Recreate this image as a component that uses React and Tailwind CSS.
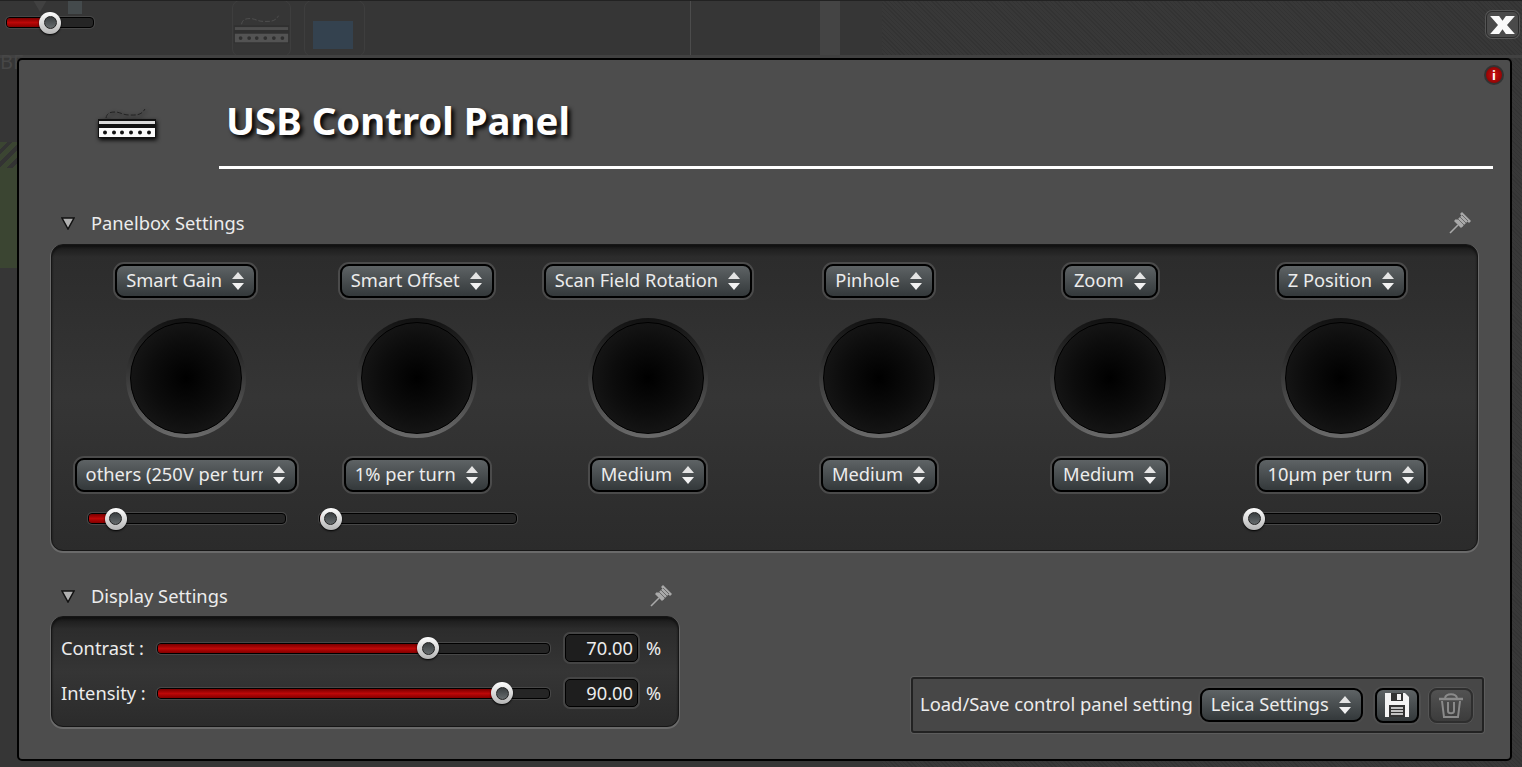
const sectionWell =
  "rounded-[12px] border border-[#161616] bg-[linear-gradient(#181818_0px,#2c2c2c_12px,#353535_50%,#2b2b2b_100%)] shadow-[inset_0_2px_2px_#111,0_1px_0_1px_#6a6a6a]";

const panelColumns = [
  { top: "Smart Gain", bottom: "others (250V per turn)", clip: true, slider: 27 },
  { top: "Smart Offset", bottom: "1% per turn", slider: 11 },
  { top: "Scan Field Rotation", bottom: "Medium" },
  { top: "Pinhole", bottom: "Medium" },
  { top: "Zoom", bottom: "Medium" },
  { top: "Z Position", bottom: "10µm per turn", slider: 10 },
];

function Arrows() {
  return (
    <svg width="12" height="20" viewBox="0 0 12 20" className="shrink-0">
      <path d="M6 1 L12 8 H0 Z" fill="#e4e4e4" />
      <path d="M0 12 H12 L6 19 Z" fill="#f2f2f2" />
    </svg>
  );
}

function Select({ label, clip }) {
  return (
    <div className="flex h-[34px] items-center rounded-[9px] border-2 border-black bg-gradient-to-b from-[#5e6365] to-[#34393b] pl-[9px] pr-[10px] text-[#ececec] shadow-[0_0_0_2px_#4b4b4b]">
      {clip ? (
        <span className="w-[177px] overflow-hidden whitespace-nowrap pb-[3px]">{label}</span>
      ) : (
        <span className="whitespace-nowrap pb-[3px]">{label}</span>
      )}
      <span className="ml-[10px] flex items-center">
        <Arrows />
      </span>
    </div>
  );
}

function Slider({ width, at }) {
  return (
    <div
      className="relative h-[11px] rounded-[4px] border border-black bg-[#252525] shadow-[0_0_0_1px_#474747]"
      style={{ width }}
    >
      <div
        className="h-full rounded-l-[3px] bg-gradient-to-b from-[#7a0000] via-[#bd0808] to-[#850000]"
        style={{ width: at }}
      />
      <div
        className="absolute top-1/2 flex h-[22px] w-[22px] -translate-x-1/2 -translate-y-1/2 items-center justify-center rounded-full bg-gradient-to-b from-[#ffffff] to-[#b5b5b5] shadow-[0_1px_2px_#000]"
        style={{ left: at }}
      >
        <div className="h-[13px] w-[13px] rounded-full border border-[#222] bg-gradient-to-b from-[#3a3f41] to-[#666b6d]" />
      </div>
    </div>
  );
}

function Knob() {
  return (
    <div className="flex h-[120px] w-[120px] items-center justify-center rounded-full bg-gradient-to-b from-[#111111] via-[#3a3a3a] to-[#6a6a6a]">
      <div className="h-[112px] w-[112px] rounded-full border border-black bg-[radial-gradient(circle,#000000_0%,#0c0c0c_45%,#1e1e1e_100%)]" />
    </div>
  );
}

function Pin() {
  return (
    <svg width="22" height="22" viewBox="0 0 22 22">
      <path d="M1 21 L9 13" stroke="#a9a9a9" strokeWidth="1.6" />
      <path d="M5 9 L12 16 L14 14 L7 7 Z" fill="#a9a9a9" />
      <path d="M7 9 L13 15 L20 8 L14 2 Z" fill="#a9a9a9" />
      <path d="M13 0 L22 9 L20 11 L11 2 Z" fill="#a9a9a9" />
      <path d="M9 7 L15 13 M11 5 L17 11 M13 3 L19 9" stroke="#6a6a6a" strokeWidth="1" />
    </svg>
  );
}

function SectionTitle({ title }) {
  return (
    <div className="flex h-[22px] items-center pl-[10px]">
      <svg width="14" height="13" viewBox="0 0 14 13">
        <path d="M1 1 H13 L7 12 Z" fill="#b0b0b0" stroke="#111" strokeWidth="1.5" />
      </svg>
      <span className="ml-[16px] text-[#ececec]">{title}</span>
      <span className="ml-auto flex -translate-x-[7px]">
        <Pin />
      </span>
    </div>
  );
}

function UsbIcon({ ghost }) {
  return (
    <svg width="60" height="34" viewBox="0 0 60 34" className={ghost ? "opacity-15" : ""}>
      <path
        d="M9 12 C10 7 13 6 18 6 S26 9 32 9 S44 10 48 3"
        fill="none"
        stroke={ghost ? "#ddd" : "#222"}
        strokeWidth="1"
        strokeDasharray="5 2"
      />
      <rect x="1" y="13" width="58" height="19" fill="#111" />
      <rect x="2" y="15" width="56" height="3" fill="#d8d8d8" />
      <rect x="2" y="22" width="56" height="9" fill="#fafafa" />
      {[8, 17, 25, 34, 43, 52].map((cx) => (
        <circle key={cx} cx={cx} cy="26.5" r="2" fill="#111" />
      ))}
    </svg>
  );
}

function ValueRow({ label, at, value }) {
  return (
    <div className="flex h-[32px] items-center">
      <span className="w-[96px] text-[#ececec]">{label}</span>
      <Slider width={393} at={at} />
      <div className="ml-[15px] flex h-[28px] w-[73px] items-center justify-end rounded-[5px] border border-black bg-[#1e1e1e] pr-[4px] text-[#ececec] shadow-[0_0_0_2px_#454545]">
        {value}
      </div>
      <span className="ml-[8px] text-[#ececec]">%</span>
    </div>
  );
}

function Backdrop() {
  return (
    <div className="absolute inset-0 bg-[#363636]">
      <div className="absolute left-[232px] top-0 flex h-[57px] w-[59px] items-center justify-center rounded-[8px] border border-[#3e3e3e]">
        <UsbIcon ghost />
      </div>
      <div className="absolute left-[304px] top-0 h-[57px] w-[61px] rounded-[8px] border border-[#3e3e3e] p-[8px] pt-[20px]">
        <div className="h-[28px] w-[40px] bg-[#34424f]" />
      </div>
      <div className="absolute left-[33px] top-0 h-[12px] w-[14px] bg-[#414141] [clip-path:polygon(0_0,100%_0,50%_100%)]" />
      <div className="absolute left-[68px] top-0 h-[14px] w-[14px] bg-[#444a4c]" />
      <div className="absolute left-[690px] top-0 h-[58px] w-px bg-[#4c4c4c]" />
      <div className="absolute left-[820px] top-0 h-[58px] w-[20px] bg-[#444444]" />
      <div className="absolute bottom-0 right-0 top-0 w-[640px] bg-[repeating-linear-gradient(45deg,#333333_0px,#333333_1px,#383838_1px,#383838_3px)]" />
      <div className="absolute left-0 right-0 top-[55px] h-[3px] bg-[#414141]" />
      <div className="absolute left-0 right-0 top-0 h-px bg-[#222222]" />
      <div className="absolute left-0 top-[52px] text-[20px] leading-none text-[#474747]">BF</div>
      <div className="absolute left-0 top-[142px] h-[26px] w-[17px] bg-[repeating-linear-gradient(135deg,#3b4532_0px,#3b4532_5px,#333333_5px,#333333_9px)]" />
      <div className="absolute left-0 top-[168px] h-[100px] w-[17px] bg-[#3b4532]" />
    </div>
  );
}

export default function App() {
  return (
    <div className="relative h-[767px] w-[1522px] overflow-hidden font-['Noto_Sans',sans-serif] text-[18.3px]">
      <Backdrop />

      <div className="relative">
        <div className="flex h-[58px] items-start justify-between">
          <div className="ml-[6px] mt-[17px]">
            <Slider width={88} at={43} />
          </div>
          <button className="mr-[3px] mt-[11px] flex h-[27px] w-[33px] items-center justify-center rounded-[6px] border border-[#2a2a2a] bg-[#4a4a4a] shadow-[0_0_0_1px_#555]">
            <svg width="27" height="18" viewBox="0 0 24 17" preserveAspectRatio="none">
              <path
                d="M1 0 H9 L12 4.5 L15 0 H23 L16 8.5 L23 17 H15 L12 12.5 L9 17 H1 L8 8.5 Z"
                fill="#fafafa"
              />
            </svg>
          </button>
        </div>

        <div className="relative ml-[17px] h-[703px] w-[1495px] rounded-[5px] border-2 border-black bg-[#4d4d4d]">
          <div className="absolute right-[6px] top-[5px] flex h-[20px] w-[20px] items-center justify-center rounded-full border-2 border-[#333] bg-[radial-gradient(circle,#d01010,#7a0000)] text-[13px] font-bold leading-none text-white">
            i
          </div>

          <div className="flex h-[106px] items-end">
            <div className="flex h-full w-[200px] shrink-0 justify-center pl-[15px] pt-[46px]">
              <div className="drop-shadow-[1px_2px_2px_#000]">
                <UsbIcon />
              </div>
            </div>
            <h1 className="ml-[7px] pb-[21px] text-[38.4px] font-bold leading-[50px] text-white [text-shadow:3px_3px_4px_#000]">
              USB Control Panel
            </h1>
          </div>
          <div className="ml-[200px] mr-[17px] h-[3px] bg-white" />

          <div className="ml-[32px] mr-[32px] mt-[43px]">
            <SectionTitle title="Panelbox Settings" />
            <div className={`${sectionWell} mt-[10px] grid h-[307px] grid-cols-6 pl-[18px] pr-[20px] pt-[19px]`}>
              {panelColumns.map((col) => (
                <div key={col.top} className="flex flex-col items-center">
                  <Select label={col.top} />
                  <div className="mt-[20px]">
                    <Knob />
                  </div>
                  <div className="mt-[20px]">
                    <Select label={col.bottom} clip={col.clip} />
                  </div>
                  {col.slider !== undefined && (
                    <div className="ml-[2px] mt-[21px]">
                      <Slider width={198} at={col.slider} />
                    </div>
                  )}
                </div>
              ))}
            </div>
          </div>

          <div className="ml-[32px] mr-[26px] mt-[34px] flex items-start justify-between">
            <div className="w-[628px]">
              <SectionTitle title="Display Settings" />
              <div className={`${sectionWell} mt-[9px] flex h-[111px] flex-col gap-[13px] px-[9px] pt-[15px]`}>
                <ValueRow label="Contrast :" at={270} value="70.00" />
                <ValueRow label="Intensity :" at={344} value="90.00" />
              </div>
            </div>

            <div className="mt-[92px] flex h-[56px] w-[573px] items-center rounded-[3px] border-2 border-[#222] bg-[#474747] pl-[7px] shadow-[0_0_0_1px_#5c5c5c]">
              <span className="whitespace-nowrap pb-[3px] text-[18.4px] text-[#ececec]">Load/Save control panel setting</span>
              <div className="ml-[7px]">
                <Select label="Leica Settings" />
              </div>
              <button className="ml-[12px] flex h-[35px] w-[44px] items-center justify-center rounded-[8px] border-2 border-black bg-gradient-to-b from-[#5e6365] to-[#34393b] shadow-[0_0_0_2px_#4f4f4f]">
                <svg width="26" height="26" viewBox="0 0 26 26">
                  <path d="M1 1 H21 L25 5 V25 H1 Z" fill="#f4f4f4" />
                  <rect x="7" y="1" width="12" height="8" fill="#333" />
                  <rect x="13" y="2" width="4" height="6" fill="#f4f4f4" />
                  <rect x="5" y="13" width="16" height="12" fill="#333" />
                  <path d="M7 16 H19 M7 19 H19 M7 22 H19" stroke="#f4f4f4" strokeWidth="1.5" />
                </svg>
              </button>
              <button className="ml-[10px] flex h-[35px] w-[44px] items-center justify-center rounded-[8px] border-2 border-[#2e2e2e] bg-gradient-to-b from-[#525252] to-[#3c3c3c] shadow-[0_0_0_1px_#555]">
                <svg width="26" height="28" viewBox="0 0 26 28" fill="none" stroke="#8a8a8a">
                  <path d="M1 8 H25" strokeWidth="2.5" />
                  <path d="M7 7 C8 2 18 2 19 7" strokeWidth="2" />
                  <path d="M4 10 L6 26 H20 L22 10" strokeWidth="2" />
                  <path d="M10 11 V20 C10 23 16 23 16 20 V11" strokeWidth="2" />
                </svg>
              </button>
            </div>
          </div>
        </div>
      </div>
    </div>
  );
}
